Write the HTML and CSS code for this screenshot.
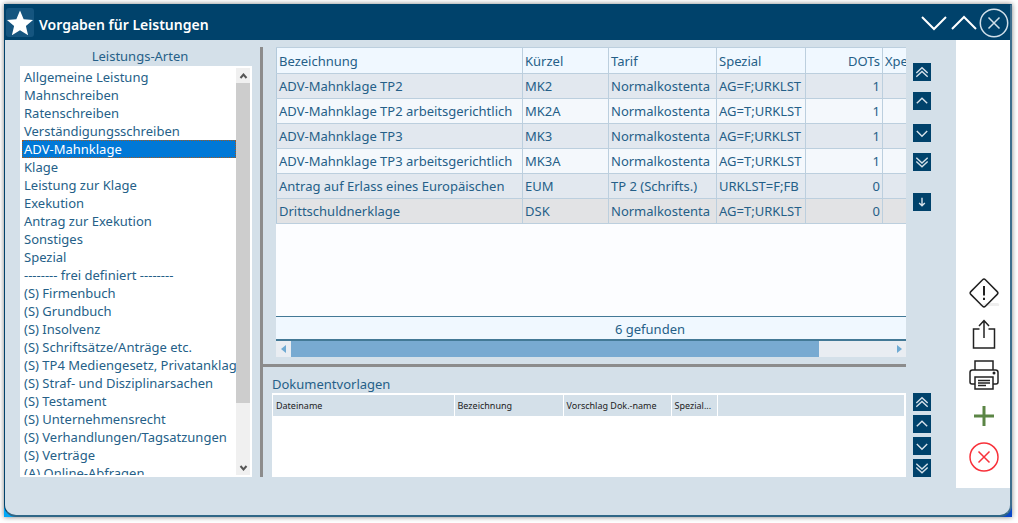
FILE: index.html
```html
<!DOCTYPE html>
<html lang="de">
<head>
<meta charset="utf-8">
<title>Vorgaben für Leistungen</title>
<link rel="stylesheet" href="styles.css">
</head>
<body>
<svg class="defs" aria-hidden="true">
  <symbol id="up" viewBox="0 0 19 19"><path d="M4 12l5.500-5.500 5.500 5.500"/></symbol>
  <symbol id="down" viewBox="0 0 19 19"><path d="M4 7.500l5.500 5.500 5.500-5.500"/></symbol>
  <symbol id="first" viewBox="0 0 19 19"><path d="M3.500 10.500l6-5.500 6 5.500M3.500 14.500l6-5.500 6 5.500"/></symbol>
  <symbol id="last" viewBox="0 0 19 19"><path d="M3.500 5l6 5.500 6-5.500M3.500 9l6 5.500 6-5.500"/></symbol>
  <symbol id="arrow" viewBox="0 0 19 19"><path d="M9.500 5v8.500M6.500 10.500l3 3 3-3"/></symbol>
</svg>
<div class="backdrop">
<div class="window">
  <header class="titlebar">
    <span class="app-icon"><svg width="29" height="28" viewBox="0 0 29 28"><path d="M14.500 1l3.800 9 9.700.800-7.400 6.300 2.300 9.500-8.400-5.100-8.400 5.100 2.300-9.500L1 10.800l9.700-.800z" fill="#fff"/></svg></span>
    <h1 class="title">Vorgaben für Leistungen</h1>
    <div class="window-buttons">
      <button type="button" aria-label="Nach unten"><svg width="26" height="16" viewBox="0 0 26 16"><path d="M1 2l12 12L25 2"/></svg></button>
      <button type="button" aria-label="Nach oben"><svg width="26" height="16" viewBox="0 0 26 16"><path d="M1 14L13 2l12 12"/></svg></button>
      <button type="button" aria-label="Schließen"><svg class="thin" width="30" height="30" viewBox="0 0 30 30"><circle cx="15" cy="15" r="13.700"/><path d="M9.500 9.500l11 11M20.500 9.500l-11 11"/></svg></button>
    </div>
  </header>
  <div class="content">
    <main class="workspace">
      <section class="kinds">
        <h2 class="kinds-title" id="kinds-title">Leistungs-Arten</h2>
        <div class="kinds-box">
          <ul class="kinds-list" role="listbox" aria-labelledby="kinds-title" tabindex="0">
            <li role="option">Allgemeine Leistung</li>
            <li role="option">Mahnschreiben</li>
            <li role="option">Ratenschreiben</li>
            <li role="option">Verständigungsschreiben</li>
            <li role="option" aria-selected="true" class="selected">ADV-Mahnklage</li>
            <li role="option">Klage</li>
            <li role="option">Leistung zur Klage</li>
            <li role="option">Exekution</li>
            <li role="option">Antrag zur Exekution</li>
            <li role="option">Sonstiges</li>
            <li role="option">Spezial</li>
            <li role="option">-------- frei definiert --------</li>
            <li role="option">(S) Firmenbuch</li>
            <li role="option">(S) Grundbuch</li>
            <li role="option">(S) Insolvenz</li>
            <li role="option">(S) Schriftsätze/Anträge etc.</li>
            <li role="option">(S) TP4 Mediengesetz, Privatanklag</li>
            <li role="option">(S) Straf- und Disziplinarsachen</li>
            <li role="option">(S) Testament</li>
            <li role="option">(S) Unternehmensrecht</li>
            <li role="option">(S) Verhandlungen/Tagsatzungen</li>
            <li role="option">(S) Verträge</li>
            <li role="option">(A) Online-Abfragen</li>
          </ul>
          <div class="vscroll">
            <button type="button" aria-label="Liste nach oben"><svg width="9" height="6" viewBox="0 0 9 6"><path d="M1.500 5l3-3.500 3 3.500"/></svg></button>
            <div class="vtrack"><div class="vthumb"></div></div>
            <button type="button" aria-label="Liste nach unten"><svg width="9" height="6" viewBox="0 0 9 6"><path d="M1.500 1l3 3.500 3-3.500"/></svg></button>
          </div>
        </div>
      </section>
      <div class="splitter-v"></div>
      <div class="panes">
        <section class="services">
          <div class="grid">
            <div class="grid-body">
              <table class="data">
                <colgroup><col class="w-name"><col class="w-short"><col class="w-tariff"><col class="w-special"><col class="w-dots"><col class="w-xpe"></colgroup>
                <thead><tr><th>Bezeichnung</th><th>Kürzel</th><th>Tarif</th><th>Spezial</th><th class="num">DOTs</th><th>Xpe</th></tr></thead>
                <tbody>
                  <tr><td>ADV-Mahnklage TP2</td><td>MK2</td><td>Normalkostenta</td><td>AG=F;URKLST</td><td class="num">1</td><td></td></tr>
                  <tr><td>ADV-Mahnklage TP2 arbeitsgerichtlich</td><td>MK2A</td><td>Normalkostenta</td><td>AG=T;URKLST</td><td class="num">1</td><td></td></tr>
                  <tr><td>ADV-Mahnklage TP3</td><td>MK3</td><td>Normalkostenta</td><td>AG=F;URKLST</td><td class="num">1</td><td></td></tr>
                  <tr><td>ADV-Mahnklage TP3 arbeitsgerichtlich</td><td>MK3A</td><td>Normalkostenta</td><td>AG=T;URKLST</td><td class="num">1</td><td></td></tr>
                  <tr><td>Antrag auf Erlass eines Europäischen</td><td>EUM</td><td>TP 2 (Schrifts.)</td><td>URKLST=F;FB</td><td class="num">0</td><td></td></tr>
                  <tr class="current"><td>Drittschuldnerklage</td><td>DSK</td><td>Normalkostenta</td><td>AG=T;URKLST</td><td class="num">0</td><td></td></tr>
                </tbody>
              </table>
            </div>
            <div class="grid-count">6 gefunden</div>
            <div class="hscroll">
              <button type="button" aria-label="Nach links"><svg width="6" height="8" viewBox="0 0 6 8"><path d="M5 0v8L0 4z"/></svg></button>
              <div class="htrack"><div class="hthumb"></div></div>
              <button type="button" aria-label="Nach rechts"><svg width="6" height="8" viewBox="0 0 6 8"><path d="M1 0v8l5-4z"/></svg></button>
            </div>
          </div>
          <div class="nav nav-top">
            <div class="nav-pair">
              <button type="button" aria-label="Erster Eintrag"><svg><use href="#first"/></svg></button>
              <button type="button" aria-label="Eintrag hinauf"><svg><use href="#up"/></svg></button>
            </div>
            <div class="nav-pair">
              <button type="button" aria-label="Eintrag hinunter"><svg><use href="#down"/></svg></button>
              <button type="button" aria-label="Letzter Eintrag"><svg><use href="#last"/></svg></button>
            </div>
            <button type="button" class="nav-move" aria-label="Übernehmen"><svg><use href="#arrow"/></svg></button>
          </div>
        </section>
        <div class="splitter-h"></div>
        <section class="templates">
          <h2 class="templates-title">Dokumentvorlagen</h2>
          <div class="templates-row">
            <div class="templates-box">
              <table class="docs">
                <colgroup><col class="d-file"><col class="d-name"><col class="d-suggest"><col class="d-special"><col></colgroup>
                <thead><tr><th>Dateiname</th><th>Bezeichnung</th><th>Vorschlag Dok.-name</th><th>Spezial...</th><th></th></tr></thead>
              </table>
            </div>
            <div class="nav nav-bottom">
              <button type="button" aria-label="Erste Vorlage"><svg><use href="#first"/></svg></button>
              <button type="button" aria-label="Vorlage hinauf"><svg><use href="#up"/></svg></button>
              <button type="button" aria-label="Vorlage hinunter"><svg><use href="#down"/></svg></button>
              <button type="button" aria-label="Letzte Vorlage"><svg><use href="#last"/></svg></button>
            </div>
          </div>
        </section>
      </div>
    </main>
    <aside class="actions">
      <button type="button" aria-label="Hinweis"><svg width="32" height="32" viewBox="0 0 32 32"><path d="M18 26h12q2 1 1 3H10z" fill="#eee"/><g class="ink"><path d="M14.600 2.800L2.800 14.600q-1.400 1.400 0 2.800l11.800 11.800q1.400 1.400 2.800 0l11.800-11.800q1.400-1.400 0-2.800L17.400 2.800q-1.400-1.400-2.800 0z"/><path d="M16 9v9.500M16 20.800v2.200" stroke-width="2"/></g></svg></button>
      <button type="button" aria-label="Exportieren"><svg width="32" height="32" viewBox="0 0 32 32"><g class="ink"><path d="M11.500 11H5.500v19h21V11h-6M16 20V3M11 8l5-5.500L21 8"/></g></svg></button>
      <button type="button" aria-label="Drucken"><svg width="32" height="32" viewBox="0 0 32 32"><g class="ink"><path d="M7 11V2h18v9M7 25H4q-2 0-2-2V13.500q0-2.500 2.500-2.500h23q2.500 0 2.500 2.500V23q0 2-2 2h-3M7 18h18v12H7z"/><path d="M10 21.500h12M10 24h12M10 26.500h8"/></g><circle cx="26" cy="14" r="1.500" fill="#222"/></svg></button>
      <button type="button" aria-label="Hinzufügen"><svg width="32" height="32" viewBox="0 0 32 32"><path d="M16 6v20M6 16h20" stroke="#5b8545" stroke-width="3"/></svg></button>
      <button type="button" aria-label="Abbrechen"><svg width="32" height="32" viewBox="0 0 32 32"><g fill="none" stroke="#f8313a" stroke-width="1.500"><circle cx="16" cy="16" r="14"/><path d="M10.500 10.500l11 11M21.500 10.500l-11 11"/></g></svg></button>
    </aside>
  </div>
</div>
</div>
</body>
</html>
```
FILE: styles.css
```css
* { box-sizing: border-box; }
body {
  margin: 0;
  height: 100vh;
  padding: 4px 6px 6px 4px;
  background: #fff;
  color: #255f88;
  font: 13px/18px "Noto Sans", "Open Sans", sans-serif;
}
button {
  display: flex;
  align-items: center;
  justify-content: center;
  padding: 0;
  border: 0;
  background: none;
  flex: none;
}
svg { display: block; }
.defs { display: none; }
h1, h2 { margin: 0; font-weight: 400; }
.backdrop {
  height: 100%;
  background: linear-gradient(to right, #00a8f8, #0a48c8);
  box-shadow: 0 0 5px rgba(0, 0, 0, .5);
}
.window {
  height: 100%;
  display: flex;
  flex-direction: column;
  border: 1px solid #00426b;
  border-right: 2px solid #3d6f8e;
  border-bottom: 2px solid #2f6787;
  border-radius: 0 0 12px 12px;
  background: #d4e0e9;
  overflow: hidden;
}
.titlebar {
  flex: none;
  display: flex;
  align-items: center;
  height: 35px;
  padding: 0 1px;
  background: #00426b;
  color: #fff;
}
.app-icon {
  display: flex;
  align-items: center;
  justify-content: center;
  width: 28px;
  height: 29px;
  border-radius: 3px;
  background: #15557f;
}
.title { flex: 1; margin-left: 5px; padding-top: 4px; font-size: 14px; line-height: 20px; font-weight: 600; }
.window-buttons { display: flex; gap: 4px; align-items: center; }
.window-buttons button:last-child { margin-left: -2px; }
.window-buttons svg { fill: none; stroke: #fff; stroke-width: 2; }
.window-buttons .thin { stroke: #d0dfe9; stroke-width: 1.500; }

.content { flex: 1; min-height: 0; display: flex; }
.workspace { flex: 1; min-width: 0; display: flex; padding: 7px 0 38px 15px; }

.kinds { flex: none; width: 232px; display: flex; flex-direction: column; }
.kinds-title { flex: none; padding-left: 8px; height: 19px; font-size: 13px; line-height: 19px; text-align: center; }
.kinds-box { flex: 1; min-height: 0; display: flex; padding: 2px; background: #fff; }
.kinds-list { flex: 1; min-width: 0; margin: 0; padding: 0; list-style: none; overflow: hidden; outline: 0; }
.kinds-list li { height: 18px; padding-left: 2px; white-space: nowrap; overflow: hidden; }
.kinds-list .selected { background: #0078d7; color: #fff; outline: 1px dotted #a05a20; outline-offset: -1px; }
.vscroll { flex: none; width: 14px; display: flex; flex-direction: column; background: #f0f0f0; }
.vscroll button { height: 15px; }
.vscroll svg { fill: none; stroke: #555; stroke-width: 2; }
.vtrack { flex: 1; }
.vthumb { height: 85%; background: #cdcdcd; }

.splitter-v { flex: none; width: 3px; margin-left: 8px; background: #8c8c8c; }
.panes { flex: 1; min-width: 0; display: flex; flex-direction: column; }
.services { flex: 1; min-height: 0; display: flex; padding: 0 25px 7px 13px; gap: 7px; }
.grid { flex: 1; min-width: 0; display: flex; flex-direction: column; }
.grid-body { flex: 1; min-height: 0; overflow: hidden; background: #fcfdff; }
.data { width: 706px; border-collapse: collapse; table-layout: fixed; }
.w-name { width: 246px; }
.w-short { width: 86px; }
.w-tariff { width: 108px; }
.w-special { width: 89px; }
.w-dots { width: 77px; }
.w-xpe { width: 100px; }
.data th, .data td {
  height: 25px;
  padding: 0 2px;
  border: 1px solid #bccfde;
  border-left-color: #b3cadb;
  text-align: left;
  font-weight: 400;
  white-space: nowrap;
}
.data th { height: 26px; background: #f0f8ff; }
.data td { background: #e2e8ef; }
.data tr:nth-child(even) td { background: #f4f8fc; }
.data tr.current td { background: #e2e3e5; }
.data .num { text-align: right; }
.grid-count {
  flex: none;
  height: 25px;
  padding-left: 118px;
  border-top: 1px solid #437996;
  border-bottom: 2px solid #437996;
  background: #f0f8ff;
  line-height: 24px;
  text-align: center;
}
.hscroll { flex: none; display: flex; height: 16px; background: #e9edf2; }
.hscroll button { width: 15px; }
.hscroll svg { fill: #6faad3; }
.htrack { flex: 1; }
.hthumb { width: 88%; height: 100%; background: #78aad1; }

.nav { flex: none; display: flex; flex-direction: column; }
.nav button { width: 18px; height: 18px; background: #00426b; }
.nav svg { width: 18px; height: 18px; fill: none; stroke: #d4e0e9; stroke-width: 1.500; }
.nav-top { gap: 14px; padding-top: 16px; }
.nav-pair { display: flex; flex-direction: column; gap: 11px; }
.nav-move { margin-top: 8px; }
.nav-bottom { justify-content: space-between; }

.splitter-h { flex: none; height: 3px; margin-right: 50px; background: #8c8c8c; }
.templates { flex: none; display: flex; flex-direction: column; height: 110px; padding: 8px 25px 0 9px; }
.templates-title { flex: none; height: 18px; font-size: 13px; line-height: 18px; }
.templates-row { flex: 1; display: flex; gap: 7px; }
.templates-box { flex: 1; min-width: 0; padding: 2px 1px; background: #fff; }
.docs { width: 100%; border-collapse: collapse; table-layout: fixed; color: #222; font-size: 9px; }
.docs th { height: 21px; padding: 0 3px; border-right: 1px solid #fff; background: #d4e0e9; text-align: left; font-weight: 400; white-space: nowrap; }
.d-file { width: 181px; }
.d-name { width: 109px; }
.d-suggest { width: 108px; }
.d-special { width: 46px; }

.actions {
  flex: none;
  width: 54px;
  display: flex;
  flex-direction: column;
  justify-content: flex-end;
  align-items: center;
  gap: 9px;
  margin-bottom: 27px;
  padding: 0 0 15px 1px;
  background: #fff;
}
.ink { fill: none; stroke: #222; stroke-width: 1.500; }
```
